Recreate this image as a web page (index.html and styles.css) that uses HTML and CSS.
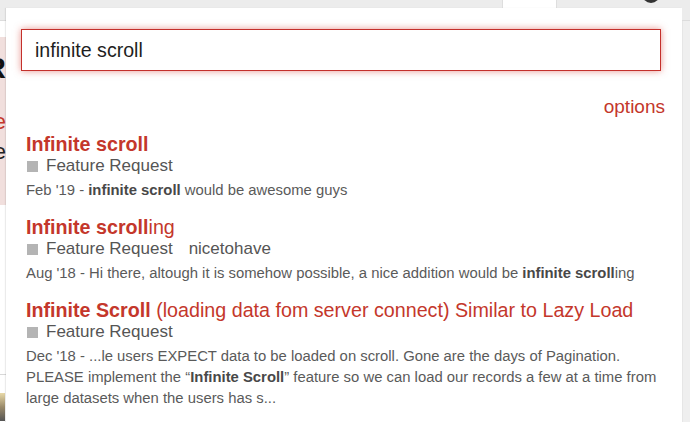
FILE: index.html
```html
<!DOCTYPE html>
<html lang="en">
<head>
<meta charset="utf-8">
<title>Search</title>
<link rel="stylesheet" href="styles.css">
</head>
<body>
<header class="site-header">
  <div class="header-tab"></div>
  <div class="avatar"></div>
</header>
<div class="layout">
  <main class="page">
    <section class="banner">
      <div class="banner-line big">FOR</div>
      <div class="banner-line red">Welcome</div>
      <div class="banner-line">Here we are the</div>
    </section>
    <div class="page-rule"></div>
    <div class="thumb"></div>
  </main>
  <aside class="rail"></aside>
</div>

<div class="search-menu">
  <div class="search-input">infinite scroll</div>
  <div class="options-row"><a class="options">options</a></div>
  <ul class="results">
    <li class="result">
      <div class="result-title"><b>Infinite scroll</b></div>
      <div class="result-meta"><span class="cat-box"></span><span class="cat-name">Feature Request</span></div>
      <div class="blurb">Feb '19 - <b>infinite scroll</b> would be awesome guys</div>
    </li>
    <li class="result">
      <div class="result-title"><b>Infinite scroll</b>ing</div>
      <div class="result-meta"><span class="cat-box"></span><span class="cat-name">Feature Request</span><span class="tag">nicetohave</span></div>
      <div class="blurb">Aug '18 - Hi there, altough it is somehow possible, a nice addition would be <b>infinite scroll</b>ing</div>
    </li>
    <li class="result">
      <div class="result-title"><b>Infinite Scroll</b> (loading data fom server connect) Similar to Lazy Load</div>
      <div class="result-meta"><span class="cat-box"></span><span class="cat-name">Feature Request</span></div>
      <div class="blurb">Dec '18 - ...le users EXPECT data to be loaded on scroll. Gone are the days of Pagination. PLEASE implement the “<b>Infinite Scroll</b>” feature so we can load our records a few at a time from large datasets when the users has s...</div>
    </li>
  </ul>
</div>
</body>
</html>
```

FILE: styles.css
```css
html, body {
  margin: 0;
  padding: 0;
}
body {
  width: 690px;
  height: 422px;
  overflow: hidden;
  position: relative;
  background: #ffffff;
  font-family: "Liberation Sans", Arial, Helvetica, sans-serif;
}

.site-header {
  height: 20px;
  background: #ececec;
  border-bottom: 1px solid #dcdcdc;
  display: flex;
  justify-content: flex-end;
  align-items: flex-start;
  overflow: hidden;
}
.header-tab {
  width: 53px;
  height: 21px;
  background: #ffffff;
  border-left: 1px solid #dedede;
  border-right: 1px solid #dedede;
  margin-right: 85px;
}
.avatar {
  width: 18px;
  height: 18px;
  border-radius: 50%;
  background: #333333;
  margin-top: -15px;
  margin-right: 30px;
}

.layout {
  display: flex;
  height: 401px;
}
.page {
  flex: 1;
  padding-top: 16px;
  overflow: hidden;
}
.banner {
  height: 168px;
  background: #f1dfdd;
  width: 300px;
  margin-left: -294px;
  padding-top: 14px;
  box-sizing: border-box;
  overflow: hidden;
}
.banner-line {
  direction: rtl;
  text-align: right;
  white-space: nowrap;
  font-size: 22px;
  line-height: 30px;
  color: #222;
}
.banner-line.big {
  font-size: 30px;
  font-weight: bold;
  line-height: 34px;
  color: #111;
  margin-bottom: 22px;
}
.banner-line.red {
  color: #c4372b;
}
.page-rule {
  margin-top: 169px;
  height: 1px;
  background: #d8d8d8;
  width: 10px;
}
.thumb {
  margin-top: 18px;
  width: 5px;
  height: 28px;
  background: linear-gradient(#e8d9a8, #9a8a6a 50%, #555 100%);
}
.rail {
  width: 7px;
  background: #efefef;
  border-left: 1px solid #e6e6e6;
}

.search-menu {
  position: absolute;
  left: 6px;
  top: 8px;
  width: 676px;
  bottom: 0;
  background: #ffffff;
  box-shadow: -1px 0 1px rgba(0, 0, 0, 0.08);
  padding: 21px 21px 0 15px;
  box-sizing: border-box;
}
.search-input {
  height: 42px;
  box-sizing: border-box;
  border: 1px solid #c4302b;
  box-shadow: 0 0 7px rgba(214, 60, 50, 0.55);
  padding: 0 13px;
  font-size: 19.6px;
  line-height: 40px;
  color: #1e1e1e;
}
.options-row {
  display: flex;
  justify-content: flex-end;
  margin-top: 24px;
}
.options {
  font-size: 19px;
  line-height: 24px;
  color: #c4372b;
  margin-right: -4px;
}
.results {
  list-style: none;
  margin: 14px 0 0;
  padding: 0 0 0 5px;
}
.result {
  margin-bottom: 15px;
}
.result-title {
  font-size: 19.7px;
  line-height: 22px;
  color: #c4372b;
}
.result-title b {
  font-weight: bold;
}
.result-meta {
  display: flex;
  align-items: center;
  height: 22px;
  font-size: 17px;
  color: #555555;
}
.cat-box {
  width: 11px;
  height: 11px;
  background: #b4b4b4;
  margin-left: 1px;
  margin-right: 8px;
  margin-top: 1px;
}
.tag {
  margin-left: 16px;
}
.blurb {
  margin-top: 3px;
  font-size: 14.85px;
  line-height: 21px;
  color: #5a5a5a;
}
.blurb b {
  color: #484848;
}
```
